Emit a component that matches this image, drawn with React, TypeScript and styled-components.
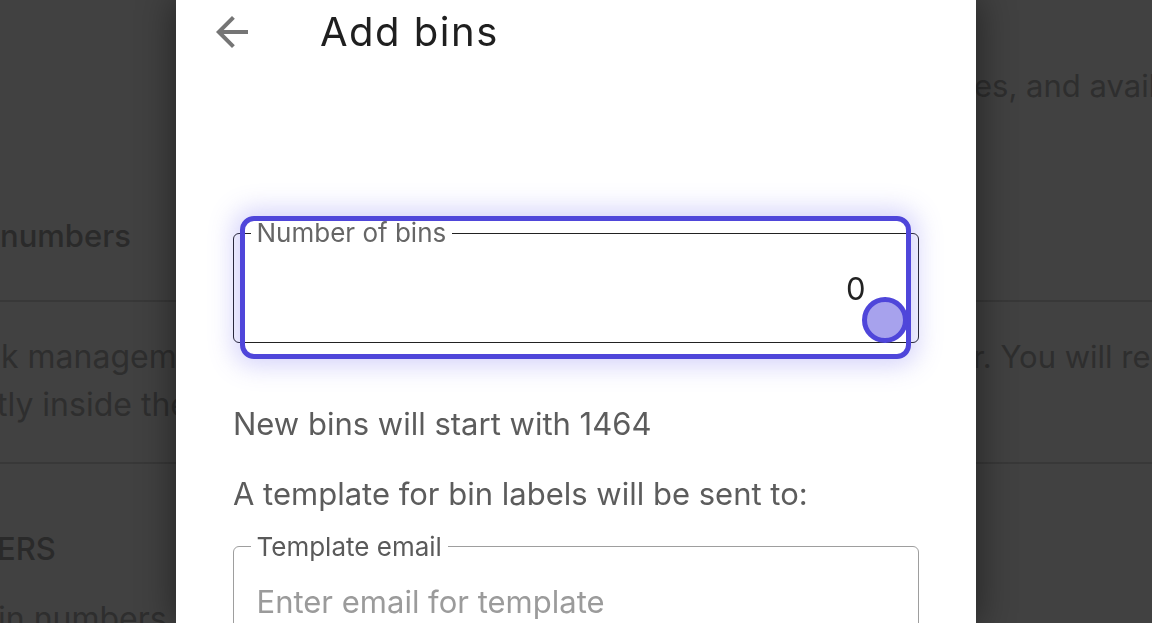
import styled, { createGlobalStyle } from "styled-components";

const GlobalStyle = createGlobalStyle`
  html, body {
    margin: 0;
    padding: 0;
    height: 100%;
    overflow: hidden;
    background: #414141;
    font-family: Inter, "Noto Sans", sans-serif;
  }
  * { box-sizing: border-box; }
`;

// ---- dimmed page behind the drawer ----

const Page = styled.div`
  width: 100%;
  height: 100vh;
  background: #414141;
  color: #2d2d2d;
  font-size: 31px;
`;

const Row = styled.div<{ $height?: number; $pad?: string }>`
  display: grid;
  grid-template-columns: 176px 800px 176px;
  height: ${(p) => (p.$height ? `${p.$height}px` : "auto")};
  padding: ${(p) => p.$pad || "0"};
  align-items: center;
`;

const Cell = styled.div<{ $weight?: number; $shift?: number; $size?: number }>`
  overflow: hidden;
  white-space: nowrap;
  line-height: 48px;
  font-size: ${(p) => p.$size || 31}px;
  font-weight: ${(p) => p.$weight || 400};
  color: ${(p) => (p.$weight && p.$weight > 400 ? "#2a2a2a" : "#2e2e2e")};
  text-indent: ${(p) => p.$shift || 0}px;
`;

const Divider = styled.div`
  height: 2px;
  background: #383838;
`;

// ---- drawer ----

const Drawer = styled.aside`
  position: fixed;
  top: 0;
  left: 176px;
  width: 800px;
  height: 100vh;
  background: #ffffff;
  box-shadow: 0 0 34px 2px rgba(0, 0, 0, 0.45);
  padding: 0 57px;
  display: flex;
  flex-direction: column;

  & > * {
    flex-shrink: 0;
  }
`;

const Header = styled.header`
  height: 64px;
  display: flex;
  align-items: center;
  margin: 0 -25px;
`;

const BackButton = styled.button`
  width: 48px;
  height: 48px;
  padding: 0;
  border: none;
  background: none;
  display: flex;
  align-items: center;
  justify-content: center;
  color: #757575;
  cursor: pointer;
`;

const Title = styled.h1`
  margin: 0 0 0 64px;
  font-size: 40px;
  font-weight: 400;
  letter-spacing: 1.5px;
  color: #1f1f1f;
  line-height: 48px;
`;

const FieldWrap = styled.div<{ $top: number }>`
  position: relative;
  margin-top: ${(p) => p.$top}px;
`;

const Outline = styled.fieldset<{ $tone: string }>`
  margin: 0;
  padding: 0 16.5px;
  border: 1.5px solid ${(p) => p.$tone};
  border-radius: 6px;
  min-width: 0;
`;

const Legend = styled.legend<{ $color: string }>`
  padding: 0 6px;
  font-size: 26px;
  line-height: 30px;
  color: ${(p) => p.$color};
`;

const Input = styled.input<{ $align: string; $top: number; $bottom: number }>`
  display: block;
  width: 100%;
  height: 40px;
  margin: ${(p) => p.$top}px 0 ${(p) => p.$bottom}px;
  padding: ${(p) => (p.$align === "right" ? "0 36px 0 0" : "0 0 0 6px")};
  border: none;
  outline: none;
  background: transparent;
  font-family: inherit;
  font-size: 31px;
  text-align: ${(p) => p.$align};
  color: #222;

  &::placeholder {
    color: #9b9b9b;
  }
`;

const FocusRing = styled.div`
  position: absolute;
  top: -2px;
  left: 7px;
  right: 8px;
  bottom: -16px;
  border: 5.5px solid #4f46da;
  border-radius: 14px;
  box-shadow: 0 0 26px 6px rgba(98, 88, 236, 0.28);
  pointer-events: none;
`;

const Pointer = styled.div`
  position: absolute;
  top: 79px;
  right: 11px;
  width: 46px;
  height: 46px;
  border-radius: 50%;
  border: 5.5px solid #4f46da;
  background: #a7a2ed;
`;

const Helper = styled.p<{ $top: number }>`
  margin: ${(p) => p.$top}px 0 0;
  font-size: 31px;
  line-height: 40px;
  color: #5c5c5c;
`;

const ArrowBack = () => (
  <svg width="48" height="48" viewBox="0 0 24 24" fill="currentColor">
    <path d="M20 11H7.83l5.59-5.59L12 4l-8 8 8 8 1.41-1.41L7.83 13H20v-2z" />
  </svg>
);

export default function App() {
  return (
    <>
      <GlobalStyle />
      <Page>
        <Row $height={172}>
          <Cell />
          <span />
          <Cell $shift={-2}>es, and availability</Cell>
        </Row>
        <Row $height={128}>
          <Cell $weight={500}>numbers</Cell>
        </Row>
        <Divider />
        <Row $pad="31px 0 33px">
          <Cell $size={32} $shift={1}>k management</Cell>
          <span />
          <Cell $shift={-3}>r. You will receive</Cell>
          <Cell $size={32} $shift={-3}>tly inside the</Cell>
        </Row>
        <Divider />
        <Row $pad="61px 0 0">
          <Cell $weight={500} $shift={-3}>ERS</Cell>
        </Row>
        <Row $pad="22px 0 0">
          <Cell $size={32} $shift={-2}>in numbers</Cell>
        </Row>
      </Page>

      <Drawer>
        <Header>
          <BackButton aria-label="Back">
            <ArrowBack />
          </BackButton>
          <Title>Add bins</Title>
        </Header>

        <FieldWrap $top={154}>
          <Outline $tone="#222">
            <Legend $color="#666">Number of bins</Legend>
            <Input $align="right" $top={20} $bottom={33.5} readOnly value="0" />
          </Outline>
          <FocusRing />
          <Pointer />
        </FieldWrap>

        <Helper $top={61}>New bins will start with 1464</Helper>
        <Helper $top={30}>A template for bin labels will be sent to:</Helper>

        <FieldWrap $top={18}>
          <Outline $tone="#9e9e9e">
            <Legend $color="#5a5a5a">Template email</Legend>
            <Input $align="left" $top={20} $bottom={30} placeholder="Enter email for template" />
          </Outline>
        </FieldWrap>
      </Drawer>
    </>
  );
}
